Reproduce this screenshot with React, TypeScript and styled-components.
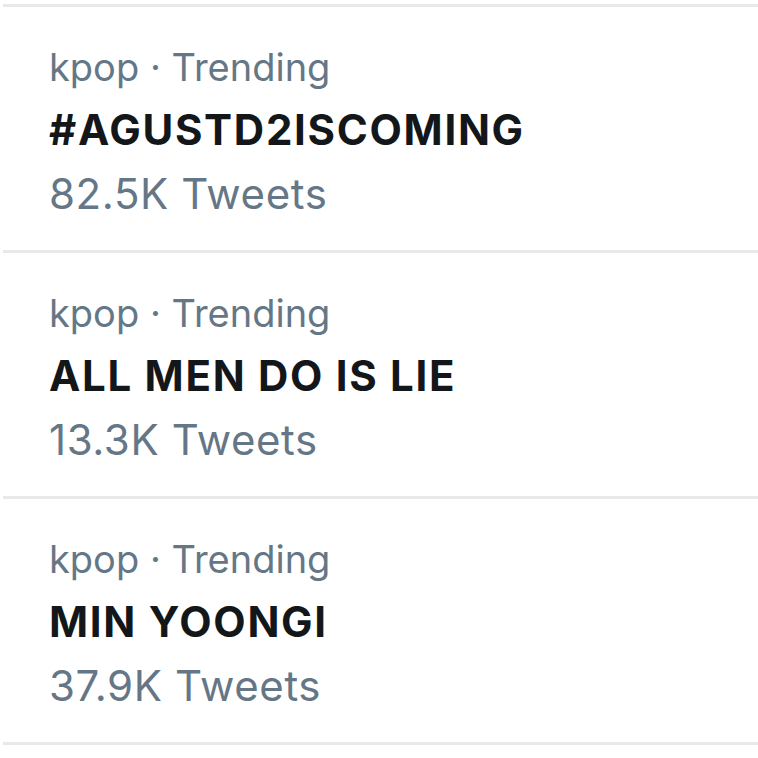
import React from 'react';
import styled, { createGlobalStyle } from 'styled-components';

const GlobalStyle = createGlobalStyle`
	html, body {
		margin: 0;
		padding: 0;
		background: #ffffff;
	}
	body {
		font-family: Inter, 'Noto Sans', 'Liberation Sans', sans-serif;
	}
`;

const StyledTrendList = styled.ul`
	list-style: none;
	margin: 0;
	padding: 4px 0 0 3px;
`;

const StyledTrendItem = styled.li`
	height: 243px;
	box-sizing: content-box;
	border-top: 3px solid #e8e9eb;
	padding: 0 0 0 46px;
	&:last-child {
		border-bottom: 3px solid #e8e9eb;
	}
`;

const StyledTrendBody = styled.div`
	display: flex;
	flex-direction: column;
	padding-top: 28px;
`;

// 카테고리 줄과 트윗 수 줄은 글자 크기가 조금 다름
const StyledMeta = styled.div<{ $size: number; $spacing?: number }>`
	font-size: ${({ $size }) => $size}px;
	letter-spacing: ${({ $spacing }) => $spacing ?? 0}px;
	line-height: 64px;
	color: #657786;
	white-space: nowrap;
`;

const StyledTitle = styled.div`
	font-size: 42px;
	letter-spacing: 1.7px;
	line-height: 64px;
	font-weight: 700;
	color: #14171a;
	white-space: nowrap;
	margin-top: -1px;
`;

type Trend = {
	category: string;
	title: string;
	tweets: string;
};

const trends: Trend[] = [
	{ category: 'kpop', title: '#AGUSTD2ISCOMING', tweets: '82.5K' },
	{ category: 'kpop', title: 'ALL MEN DO IS LIE', tweets: '13.3K' },
	{ category: 'kpop', title: 'MIN YOONGI', tweets: '37.9K' },
];

const App: React.FC = () => {
	return (
		<>
			<GlobalStyle />
			<StyledTrendList>
				{trends.map((trend) => (
					<StyledTrendItem key={trend.title}>
						<StyledTrendBody>
							<StyledMeta $size={38}>{trend.category} · Trending</StyledMeta>
							<StyledTitle>{trend.title}</StyledTitle>
							<StyledMeta $size={42} $spacing={0.6}>
								{trend.tweets} Tweets
							</StyledMeta>
						</StyledTrendBody>
					</StyledTrendItem>
				))}
			</StyledTrendList>
		</>
	);
};

export default App;
